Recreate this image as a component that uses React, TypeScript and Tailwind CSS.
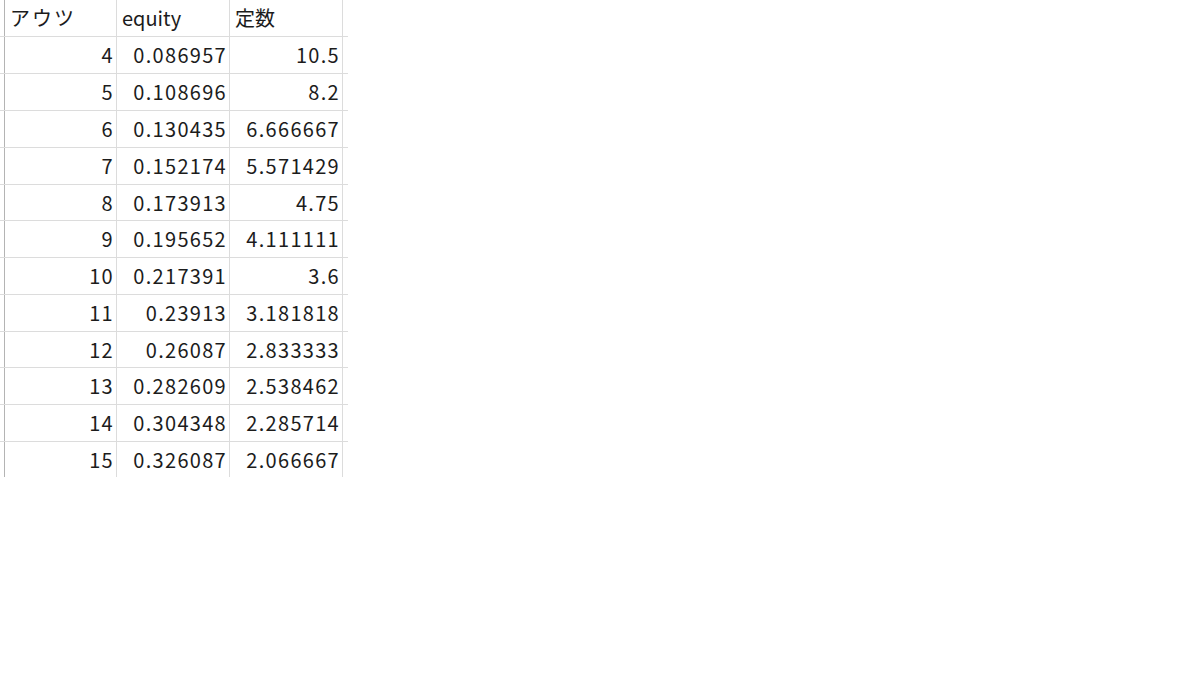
const ROWS: { id: string; equity: string; teisu: string; h: string }[] = [
  { id: '4', equity: '0.086957', teisu: '10.5', h: 'h-[37px]' },
  { id: '5', equity: '0.108696', teisu: '8.2', h: 'h-[37px]' },
  { id: '6', equity: '0.130435', teisu: '6.666667', h: 'h-[37px]' },
  { id: '7', equity: '0.152174', teisu: '5.571429', h: 'h-[37px]' },
  { id: '8', equity: '0.173913', teisu: '4.75', h: 'h-[36px]' },
  { id: '9', equity: '0.195652', teisu: '4.111111', h: 'h-[37px]' },
  { id: '10', equity: '0.217391', teisu: '3.6', h: 'h-[37px]' },
  { id: '11', equity: '0.23913', teisu: '3.181818', h: 'h-[37px]' },
  { id: '12', equity: '0.26087', teisu: '2.833333', h: 'h-[36px]' },
  { id: '13', equity: '0.282609', teisu: '2.538462', h: 'h-[37px]' },
  { id: '14', equity: '0.304348', teisu: '2.285714', h: 'h-[37px]' },
  { id: '15', equity: '0.326087', teisu: '2.066667', h: 'h-[35px]' },
];

function Row({
  a,
  b,
  c,
  h,
  header,
  last,
}: {
  a: string;
  b: string;
  c: string;
  h: string;
  header?: boolean;
  last?: boolean;
}) {
  const align = header ? 'justify-start pl-[5px]' : 'justify-end pr-[2px] tracking-[1.3px]';
  return (
    <div className={`flex ${h} w-[348px] ${last ? '' : 'border-b border-[#dcdcdc]'}`}>
      <div className="w-[5px] shrink-0 border-r border-[#b4b4b4]" />
      <div className={`flex w-[112px] shrink-0 items-center border-r border-[#dcdcdc] ${align} ${header ? 'tracking-[2px]' : ''}`}>
        {a}
      </div>
      <div className={`flex w-[113px] shrink-0 items-center border-r border-[#dcdcdc] ${align}`}>{b}</div>
      <div className={`flex w-[113px] shrink-0 items-center border-r border-[#dcdcdc] ${align}`}>{c}</div>
      <div className="w-[5px] shrink-0" />
    </div>
  );
}

export default function App() {
  return (
    <div
      className="h-[675px] w-[1200px] bg-white text-[20px] leading-none text-[#1c1c1c]"
      style={{ fontFamily: '"Noto Sans CJK JP", "Noto Sans", sans-serif' }}
    >
      <Row a="アウツ" b="equity" c="定数" h="h-[37px]" header />
      {ROWS.map((r, i) => (
        <Row key={r.id} a={r.id} b={r.equity} c={r.teisu} h={r.h} last={i === ROWS.length - 1} />
      ))}
    </div>
  );
}
